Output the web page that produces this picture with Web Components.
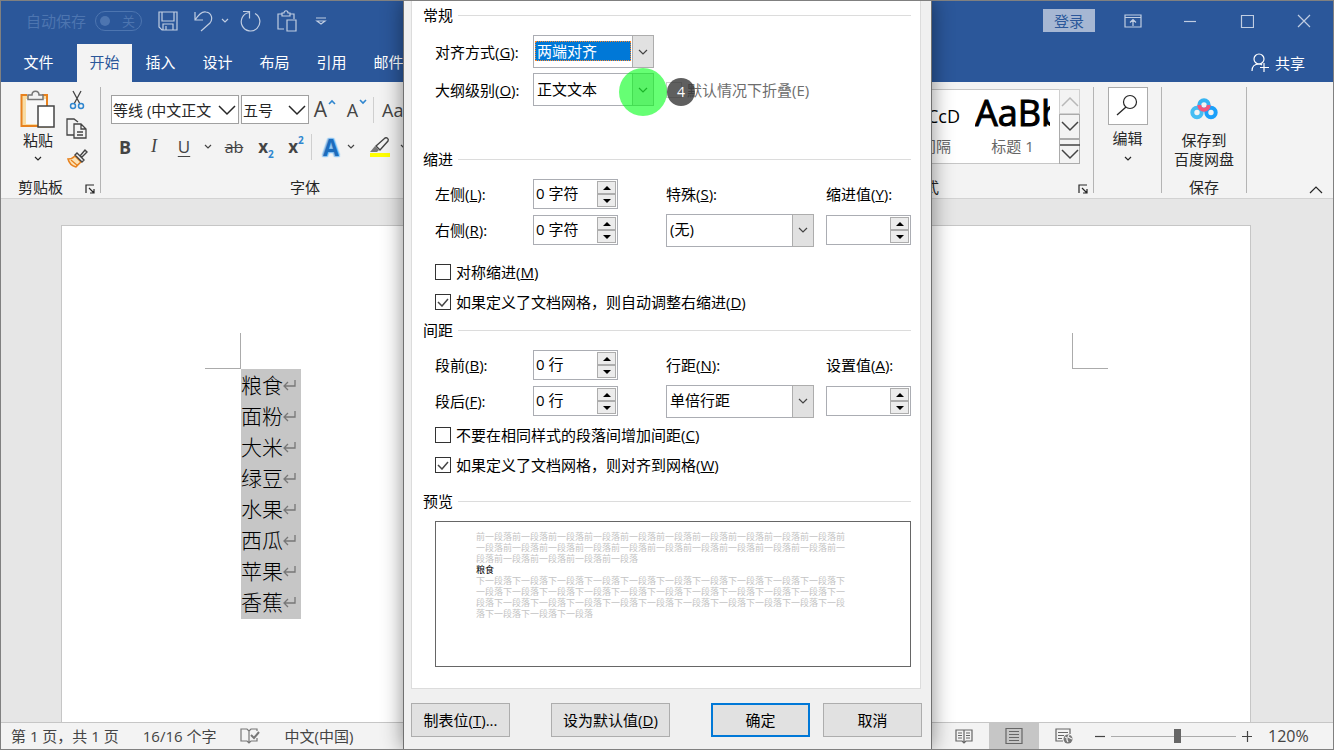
<!DOCTYPE html>
<html lang="zh-CN">
<head>
<meta charset="utf-8">
<title>Word</title>
<style>
  body { margin: 0; font: 15px/20px "Open Sans", "Noto Sans CJK SC", sans-serif; color: #262626; }
</style>
</head>
<body>
<word-window></word-window>
<script>
const define = (name, render) => customElements.define(name, class extends HTMLElement {
  connectedCallback() {
    if (this.shadowRoot) return;
    this.attachShadow({ mode: 'open' }).innerHTML = typeof render === 'function' ? render(this) : render;
  }
});

const reset = `
  :host, *, *::before, *::after { box-sizing: border-box; }
  button { font: inherit; color: inherit; background: none; border: 0; padding: 0; margin: 0;
           display: flex; align-items: center; justify-content: center; white-space: nowrap; }
  select, input { font: inherit; color: inherit; margin: 0; border-radius: 0; outline: 0; }
`;

/* ---------- icons ---------- */
const icons = {
  save: [20, 20, '<path d="M1 1h18v18H4l-3-3zM4 1v9h12V1M5 19v-6h10v6M8 19v-4"/>'],
  undo: [20, 22, '<path d="M2 2v8h8M2 10C6 4 10 1 13 2c6 1 7 7 4 11l-9 8"/>'],
  redo: [22, 22, '<path d="M9 2.500A9.300 9.300 0 1 0 15 3.500M3 1.500h6.500v7"/>'],
  clip: [20, 22, '<path d="M7 19H1V4h4M13 4h4v5M5 6V3h2c0-3 4-3 4 0h2v3zM10 10h9v11h-9z"/>'],
  qat: [12, 8, '<path d="M1 1h10M2 4h8L6 7z"/>'],
  chev: [8, 5, '<path d="M1 1l3 3 3-3"/>'],
  caret: [10, 6, '<path d="M1 1l4 4 4-4"/>'],
  inc: [8, 6, '<path d="M1 5l3-3 3 3" stroke-width="1.600"/>'],
  dec: [8, 6, '<path d="M1 1l3 3 3-3" stroke-width="1.600"/>'],
  wide: [18, 11, '<path d="M1 1l8 8 8-8" stroke-width="1.5"/>'],
  wideup: [18, 11, '<path d="M1 10l8-8 8 8" stroke-width="1.5"/>'],
  more: [20, 18, '<path d="M0 2h20M2 7l8 8 8-8" stroke-width="1.5"/>'],
  collapse: [14, 8, '<path d="M1 7l6-6 6 6"/>'],
  display: [18, 14, '<path d="M1 1h16v12H1zM1 3.500h16M9 12V6M6 8.500l3-3 3 3"/>'],
  min: [14, 14, '<path d="M1 7.500h12"/>'],
  max: [14, 14, '<path d="M1.500 1.500h12v12h-12z"/>'],
  close: [14, 14, '<path d="M1 1l12 12M13 1L1 13"/>'],
  share: [18, 20, '<circle cx="8" cy="6" r="5"/><path d="M1 18c0-4 2-7 7-7 1 0 2 0 3 1M13 10v9M9 14.500h9"/>'],
  paste: [36, 40, '<path d="M5 6h26v32H2V6z" fill="#f8dca4" stroke="none"/><rect x="6" y="9" width="20" height="25" fill="#f8f8f8" stroke="none"/><path d="M7 5H1.500v31H18M22 5h5v11" stroke="#e8821e" stroke-width="2"/><path d="M28 4h8v12h-8zM1 37h17v3H1z" fill="#f3f3f3" stroke="none"/><path d="M8 9.500V5h4c0-5 7-5 7 0h4v4.500z" fill="#f3f3f3" stroke="#777" stroke-width="1.500"/><path d="M18 16h16v21H18z" fill="#fff" stroke="#444" stroke-width="1.500"/>'],
  cut: [16, 20, '<path d="M4 1l7 13M12 1L5 14" stroke="#444" stroke-width="1.300"/><circle cx="4" cy="16" r="2.500" stroke="#2f86cf" stroke-width="1.500"/><circle cx="12" cy="16" r="2.500" stroke="#2f86cf" stroke-width="1.500"/>'],
  copy: [22, 22, '<path d="M8 17H1V1h7l4 3M8 6h7l5 5v9H8zM15 6v5h5M11 14h6M11 17h6" stroke="#444" stroke-width="1.300"/>'],
  brush: [22, 20, '<path d="M2 11c3 0 5-1 7-3l6 6c-2 2-4 3-5 5C6 18 3 15 2 11z" fill="#fbe3b8" stroke="#e8821e" stroke-width="1.500"/><path d="M5 12l7 6" stroke="#e8821e"/><path d="M9 7l2-2 7 7-2 2zM14 8l5-6 2 2-6 6" fill="#f3f3f3" stroke="#444" stroke-width="1.400"/>'],
  launch: [10, 10, '<path d="M1 9V1h8M4 4l5 5M9 5v4H5"/>'],
  find: [28, 24, '<circle cx="16" cy="8" r="6.500"/><path d="M12 13l-9 8" stroke-width="1.400"/>'],
  baidu: [28, 22, '<g stroke-width="4"><circle cx="14" cy="7" r="4.700" stroke="#36b4f2"/><circle cx="7" cy="14.500" r="4.700" stroke="#45bdf3"/><circle cx="21" cy="14.500" r="4.700" stroke="#1ba0fa"/><path d="M9.300 7a4.700 4.700 0 0 0 9.400 0" stroke="#f4567c"/></g>'],
  pen: [26, 22, '<path d="M9 10l9-8c2-1 4 1 3 3l-8 9z" stroke="#444" stroke-width="1.400" fill="#f3f3f3"/><path d="M8 10l4 4-2 2H3z" fill="#777" stroke="none"/><path d="M3 17h20v4H3z" fill="#ff0" stroke="none"/>'],
  proof: [20, 16, '<path d="M9 14V3L7 1H1v12h6l2 2 2-2h6v-3M9 3l2-2h6v2"/><path d="M11 7l3 3 5-6" stroke-width="2"/>'],
  read: [18, 16, '<path d="M9 2v12M9 2H1v11h6l2 2 2-2h6V2zM3 5h4M3 7.500h4M3 10h4M11 5h4M11 7.500h4M11 10h4"/>'],
  print: [18, 16, '<path d="M1 .5h16v15H1zM4 3.500h10M4 6.500h10M4 9.500h10M4 12.500h10"/>'],
  web: [18, 16, '<path d="M8 13H1V1h14v5M3 4.500h10M3 7.500h6M3 10.500h4"/><circle cx="13" cy="11" r="4.500" fill="#777" stroke="none"/><path d="M10 9l2 1v2l1 2M14 7l-1 2 2 1 2 1" stroke="#f3f3f3"/>'],
  minus: [12, 12, '<path d="M1 6.500h10"/>'],
  plus: [12, 12, '<path d="M1 6.500h10M6.500 1v11"/>'],
  up: [8, 4, '<path d="M0 4l4-4 4 4z" fill="#000" stroke="none"/>'],
  down: [8, 4, '<path d="M0 0h8L4 4z" fill="#000" stroke="none"/>'],
  ret: [14, 14, '<path d="M12 2v6H1M5 4L1 8l4 4" stroke-width="1.300"/>'],
  tick: [12, 9, '<path d="M1 4l4 4 6-7" stroke-width="1.500"/>']
};
define('ui-icon', el => {
  const [w, h, body] = icons[el.getAttribute('name')];
  return `<style>:host { display: inline-flex; flex: none; } svg { display: block; fill: none; stroke: currentColor; stroke-width: 1.2; }</style>
  <svg width="${w}" height="${h}" viewBox="0 0 ${w} ${h}" aria-hidden="true">${body}</svg>`;
});

/* ---------- title bar ---------- */
define('title-bar', `<style>${reset}
  :host { display: flex; height: 40px; align-items: center; padding: 0 1px 1px 0; background: #2b579a; color: #c0cde2; }
  .auto { display: flex; align-items: center; gap: 9px; padding-left: 25px; color: #4d75b0; }
  .switch { width: 47px; height: 20px; border: 1px solid #4d75b0; border-radius: 10px; justify-content: space-between; padding: 0 6px 0 4px; font-size: 13px; }
  .switch::before { content: ""; width: 10px; height: 10px; border-radius: 5px; background: #4d75b0; }
  .quick { display: flex; align-items: center; padding-left: 8px; flex: 1; }
  .quick button { height: 30px; }
  .save { width: 36px; } .undo { width: 34px; } .drop { width: 10px; } .redo { width: 42px; } .clip { width: 30px; } .qat { width: 38px; }
  .login { width: 52px; height: 23px; background: #a6b7d3; color: #2b579a; margin-right: 9px; }
  .win { width: 57px; height: 38px; }
</style>
<div class="auto"><span id="auto">自动保存</span><button class="switch" role="switch" aria-checked="false" aria-labelledby="auto">关</button></div>
<div class="quick">
  <button class="save" aria-label="保存"><ui-icon name="save"></ui-icon></button>
  <button class="undo" aria-label="撤消"><ui-icon name="undo"></ui-icon></button>
  <button class="drop" aria-label="撤消列表"><ui-icon name="chev"></ui-icon></button>
  <button class="redo" aria-label="重复"><ui-icon name="redo"></ui-icon></button>
  <button class="clip" aria-label="粘贴"><ui-icon name="clip"></ui-icon></button>
  <button class="qat" aria-label="自定义"><ui-icon name="qat"></ui-icon></button>
</div>
<button class="login">登录</button>
<button class="win" aria-label="功能区显示选项"><ui-icon name="display"></ui-icon></button>
<button class="win" aria-label="最小化"><ui-icon name="min"></ui-icon></button>
<button class="win" aria-label="最大化"><ui-icon name="max"></ui-icon></button>
<button class="win" aria-label="关闭"><ui-icon name="close"></ui-icon></button>`);

define('ribbon-tabs', `<style>${reset}
  :host { display: flex; height: 41px; padding-top: 3px; background: #2b579a; color: #fff; }
  nav { display: flex; flex: 1; }
  a { width: 57px; padding-bottom: 2px; color: inherit; text-decoration: none; display: flex; align-items: center; justify-content: center; }
  .file { width: 75px; }
  .on { width: 55px; background: #f3f3f3; color: #2b579a; margin-left: 1px; }
  .share { gap: 6px; padding-right: 28px; }
</style>
<nav><a class="file" href="#file">文件</a><a class="on" href="#home">开始</a><a href="#insert">插入</a><a href="#design">设计</a><a href="#layout">布局</a><a href="#refs">引用</a><a href="#mail">邮件</a></nav>
<button class="share"><ui-icon name="share"></ui-icon>共享</button>`);

/* ---------- ribbon ---------- */
define('ribbon-group', el => `<style>${reset}
  :host { display: flex; flex: none; }
  .main { flex: 1; min-width: 0; display: flex; flex-direction: column; }
  .body { flex: 1; }
  .foot { display: flex; height: 21px; padding-bottom: 1px; align-items: center; }
  .name { flex: 1; text-align: center; }
  .launch { width: 20px; height: 20px; padding-top: 4px; }
  .rule { width: 1px; margin: 5px 0; background: #b4b4b4; }
</style>
<div class="main"><div class="body"><slot></slot></div>
  <div class="foot"><span class="name">${el.getAttribute('label') || ''}</span>${el.hasAttribute('launcher') ? '<button class="launch" aria-label="更多选项"><ui-icon name="launch"></ui-icon></button>' : ''}</div>
</div><div class="rule"></div>`);

define('clipboard-tools', `<style>${reset}
  :host { display: flex; padding: 3px 0 0 21px; gap: 8px; }
  .paste { width: 32px; flex-direction: column; margin-top: 5px; height: 76px; justify-content: flex-start; }
  .paste ui-icon:last-child { margin-top: 6px; }
  .small { padding-left: 4px; }
  .small button { width: 22px; height: 29px; }
</style>
<button class="paste"><ui-icon name="paste"></ui-icon>粘贴<ui-icon name="chev"></ui-icon></button>
<div class="small">
  <button aria-label="剪切"><ui-icon name="cut"></ui-icon></button>
  <button aria-label="复制"><ui-icon name="copy"></ui-icon></button>
  <button aria-label="格式刷"><ui-icon name="brush"></ui-icon></button>
</div>`);

define('font-tools', `<style>${reset}
  :host { display: block; padding: 13px 0 0 10px; color: #444; }
  .row { display: flex; height: 29px; align-items: center; }
  .row + .row { margin-top: 8px; }
  .combo { position: relative; width: 128px; height: 29px; margin-right: 2px; color: #262626; }
  .size { width: 68px; margin: 0; }
  .combo ui-icon { position: absolute; right: 3px; top: 10px; pointer-events: none; }
  select { appearance: none; width: 100%; height: 29px; border: 1px solid #a0a0a0; background: #fff; padding: 0 24px 0 1px; }
  button { height: 28px; }
  .grow, .shrink { width: 32px; align-items: flex-start; gap: 1px; }
  .grow { font-size: 21px; line-height: 26px; } .shrink { font-size: 18px; line-height: 28px; }
  .grow ui-icon, .shrink ui-icon { color: #2f86cf; margin-top: 3px; }
  .case { font-size: 18px; line-height: 28px; padding-left: 8px; }
  .bar { width: 1px; height: 26px; background: #cfcfcf; }
  .w28 { width: 28px; } .w30 { width: 30px; } .w18 { width: 18px; } .w34 { width: 34px; } .w22 { width: 22px; } .w40 { width: 40px; }
  .b { font-weight: 700; font-size: 18px; } .i { font: italic 18px "Liberation Serif", serif; } .u { font-size: 17px; text-decoration: underline; text-underline-offset: 3px; }
  .ab { text-decoration: line-through; font-size: 16px; }
  .x { font-weight: 700; font-size: 17px; } .x span { color: #2f86cf; font-size: 10px; }
  .x .lo { padding-top: 14px; } .x .hi { padding-bottom: 14px; }
  .gap { width: 8px; }
  .fx { font-weight: 700; font-size: 23px; color: #1c6cbc; text-shadow: 0 0 2px #6db3ee, 1px 1px 1px #8cc4f2, -1px -1px 1px #8cc4f2, 1px -1px 1px #8cc4f2, -1px 1px 1px #8cc4f2; }
</style>
<div class="row">
  <div class="combo"><select aria-label="字体"><option>等线 (中文正文</option></select><ui-icon name="wide"></ui-icon></div>
  <div class="combo size"><select aria-label="字号"><option>五号</option></select><ui-icon name="wide"></ui-icon></div>
  <button class="grow" aria-label="增大字号">A<ui-icon name="inc"></ui-icon></button>
  <button class="shrink" aria-label="减小字号">A<ui-icon name="dec"></ui-icon></button>
  <span class="bar"></span>
  <button class="case">Aa</button>
</div>
<div class="row">
  <button class="b w28">B</button><button class="i w30">I</button><button class="u w30">U</button><button class="w18" aria-label="下划线"><ui-icon name="chev"></ui-icon></button>
  <button class="ab w34">ab</button><button class="x w30">x<span class="lo">2</span></button><button class="x w30">x<span class="hi">2</span></button>
  <span class="bar"></span><span class="gap"></span>
  <button class="fx w22">A</button><button class="w18" aria-label="文本效果"><ui-icon name="chev"></ui-icon></button>
  <button class="w40" aria-label="突出显示"><ui-icon name="pen"></ui-icon></button><button aria-label="颜色"><ui-icon name="chev"></ui-icon></button>
</div>`);

define('style-gallery', `<style>${reset}
  :host { display: flex; justify-content: flex-end; padding: 7px 13px 0 0; }
  .tiles { display: flex; height: 75px; background: #fff; border: 1px solid #c6c6c6; border-right: 0; color: #666; }
  .tile { width: 90px; height: 73px; flex-direction: column; justify-content: flex-start; align-items: stretch; padding: 0 9px 0 6px; }
  .demo { height: 46px; overflow: hidden; text-align: left; color: #000; }
  .plain { font: 18px/52px "Open Sans", sans-serif; }
  .head { font-size: 36px; line-height: 46px; -webkit-text-stroke: 1px #000; }
  .first { width: 92px; }
  .first .label { text-align: right; padding-right: 9px; }
  .scroll { display: flex; flex-direction: column; width: 21px; }
  .scroll button { height: 25px; border: 1px solid #ababab; background: #f3f3f3; color: #444; }
  .scroll .off { color: #b8b8b8; border-color: #d0d0d0; }
</style>
<div class="tiles">
  <button class="tile first"><span class="demo plain">AaBbCcDc</span><span class="label">无间隔</span></button>
  <button class="tile"><span class="demo head">AaBb</span><span>标题 1</span></button>
</div>
<div class="scroll">
  <button class="off" aria-label="上一行"><ui-icon name="wideup"></ui-icon></button>
  <button aria-label="下一行"><ui-icon name="wide"></ui-icon></button>
  <button aria-label="其他"><ui-icon name="more"></ui-icon></button>
</div>`);

define('tall-button', el => `<style>${reset}
  :host { display: block; }
  button { flex-direction: column; width: 100%; justify-content: flex-start; line-height: 19px; }
  .pic { display: flex; align-items: center; justify-content: center; }
  :host([boxed]) .pic { width: 40px; height: 38px; border: 1px solid #ababab; background: #fff; margin: 5px 0 4px; }
  :host(:not([boxed])) .pic { height: 22px; margin: 16px 0 11px; }
  .more { margin-top: 8px; }
</style>
<button><span class="pic"><ui-icon name="${el.getAttribute('icon')}"></ui-icon></span><slot></slot>${el.hasAttribute('boxed') ? '<ui-icon class="more" name="chev"></ui-icon>' : ''}</button>`);

define('word-ribbon', `<style>${reset}
  :host { display: flex; height: 117px; background: #f3f3f3; border-bottom: 1px solid #d2d2d2; }
  .clipboard { width: 100px; } .font { width: 429px; } .styles { width: 319px; } .edit { width: 68px; } .cloud { width: 85px; }
  .fill { flex: 1; }
  .tail { width: 86px; display: flex; justify-content: flex-end; align-items: flex-end; padding: 0 10px 4px 0; }
</style>
<ribbon-group class="clipboard" label="剪贴板" launcher><clipboard-tools></clipboard-tools></ribbon-group>
<ribbon-group class="font" label="字体" launcher><font-tools></font-tools></ribbon-group>
<div class="fill"></div>
<ribbon-group class="styles" label="样式" launcher><style-gallery></style-gallery></ribbon-group>
<ribbon-group class="edit"><tall-button icon="find" boxed>编辑</tall-button></ribbon-group>
<ribbon-group class="cloud" label="保存"><tall-button icon="baidu"><span>保存到<br>百度网盘</span></tall-button></ribbon-group>
<div class="tail"><button aria-label="折叠功能区"><ui-icon name="collapse"></ui-icon></button></div>`);

/* ---------- document ---------- */
define('document-page', `<style>${reset}
  :host { display: block; flex: 1; min-height: 0; overflow: hidden; background: #e6e6e6; padding: 26px 82px 0 60px; }
  .page { height: 100%; background: #fff; border: 1px solid #c6c6c6; border-bottom: 0; padding: 107px 142px 0 143px; }
  .marks { display: flex; justify-content: space-between; }
  .mark { width: 36px; height: 36px; border: solid #ababab; border-width: 0 1px 1px 0; }
  .mark + .mark { border-width: 0 0 1px 1px; }
  .text { margin-left: 36px; width: 60px; background: #c6c6c6; color: #000; font: 300 21px/31px "Noto Sans CJK SC", sans-serif; padding-bottom: 2px; }
  p { margin: 0; display: flex; align-items: center; }
  ui-icon { color: #777; }
</style>
<div class="page"><div class="marks"><div class="mark"></div><div class="mark"></div></div>
<div class="text">${['粮食', '面粉', '大米', '绿豆', '水果', '西瓜', '苹果', '香蕉'].map(t => `<p>${t}<ui-icon name="ret"></ui-icon></p>`).join('')}</div></div>`);

/* ---------- status bar ---------- */
define('status-bar', `<style>${reset}
  :host { display: flex; height: 27px; align-items: center; background: #f3f3f3; border-top: 1px solid #c6c6c6; color: #444; }
  .info { display: flex; align-items: center; gap: 24px; padding-left: 10px; flex: 1; white-space: nowrap; }
  .info ui-icon { color: #777; }
  .view { width: 50px; height: 26px; color: #666; }
  .on { background: #c6c6c6; }
  .step { width: 22px; height: 26px; }
  input { appearance: none; width: 125px; height: 14px; background: linear-gradient(#ababab, #ababab) 0 7px / 100% 1px no-repeat; }
  input::-webkit-slider-thumb { appearance: none; width: 7px; height: 14px; background: #666; }
  .zoom { width: 75px; padding-left: 10px; font-size: 16px; }
</style>
<div class="info"><span>第 1 页，共 1 页</span><span>16/16 个字</span><ui-icon name="proof"></ui-icon><span>中文(中国)</span></div>
<button class="view" aria-label="阅读视图"><ui-icon name="read"></ui-icon></button>
<button class="view on" aria-label="页面视图"><ui-icon name="print"></ui-icon></button>
<button class="view" aria-label="Web 版式"><ui-icon name="web"></ui-icon></button>
<button class="step" aria-label="缩小"><ui-icon name="minus"></ui-icon></button>
<input type="range" min="0" max="100" value="53" aria-label="显示比例">
<button class="step" aria-label="放大"><ui-icon name="plus"></ui-icon></button>
<span class="zoom">120%</span>`);

/* ---------- dialog fields ---------- */
const fieldLayout = `
  :host { display: contents; color: #000; }
  label { align-self: center; white-space: nowrap; color: #000; }
  :host([stacked]) { display: grid; grid-template-rows: 30px 30px; row-gap: 6px; grid-row: span 2; align-content: start; }
`;
const caption = el => `<label for="f">${el.getAttribute('label')}(<u>${el.getAttribute('key')}</u>):</label>`;

define('combo-field', el => `<style>${reset}${fieldLayout}
  .box { position: relative; width: 121px; height: 33px; align-self: center; color: #000; }
  :host([stacked]) .box { width: 148px; }
  select { appearance: none; width: 100%; height: 33px; border: 1px solid #abadb3; background: #fff; padding: 0 22px 2px 3px; }
  .arrow { position: absolute; right: 0; top: 0; width: 22px; height: 33px; border: 1px solid #adadad; background: #e1e1e1; display: grid; place-items: center; pointer-events: none; color: #444; }
  :host([active]) select { color: #fff; background: linear-gradient(#0078d7, #0078d7) 1px 5px / 96px 20px no-repeat #fff; }
  :host([active]) .box::before { content: ""; position: absolute; left: 2px; top: 6px; width: 96px; height: 20px; border: 1px dotted #ff8728; pointer-events: none; }
</style>
${caption(el)}<div class="box"><select id="f"><option>${el.getAttribute('value')}</option></select><span class="arrow"><ui-icon name="caret"></ui-icon></span></div>`);

define('spin-field', el => `<style>${reset}${fieldLayout}
  .box { display: flex; width: 85px; height: 30px; border: 1px solid #abadb3; background: #fff; padding: 1px; align-self: center; color: #000; }
  input { flex: 1; min-width: 0; border: 0; padding: 0 0 4px 1px; height: 26px; background: none; }
  .steps { width: 19px; }
  .steps button { width: 19px; height: 13px; border: 1px solid #adadad; background: #ececec; }
</style>
${caption(el)}<div class="box"><input id="f" type="text" value="${el.getAttribute('value') || ''}"><div class="steps"><button aria-label="增加"><ui-icon name="up"></ui-icon></button><button aria-label="减少"><ui-icon name="down"></ui-icon></button></div></div>`);

define('check-field', el => `<style>${reset}
  :host { display: flex; align-items: center; height: 20px; color: #000; }
  :host([disabled]) { color: #6d6d6d; }
  label { display: flex; align-items: center; gap: 5px; white-space: nowrap; }
  .box { position: relative; display: flex; }
  input { appearance: none; width: 16px; height: 16px; border: 1px solid #333; background: #fff; }
  input:disabled { border-color: #ccc; }
  .box ui-icon { position: absolute; left: 2px; top: 4px; color: #444; pointer-events: none; }
</style>
<label><span class="box"><input type="checkbox"${el.hasAttribute('checked') ? ' checked' : ''}${el.hasAttribute('disabled') ? ' disabled' : ''}>${el.hasAttribute('checked') ? '<ui-icon name="tick"></ui-icon>' : ''}</span><span><slot></slot></span></label>`);

define('field-section', el => `<style>
  :host { display: block; color: #000; }
  h2 { display: flex; align-items: center; gap: 5px; margin: 0 0 10px; font: inherit; }
  h2::after { content: ""; flex: 1; height: 1px; background: #dcdcdc; }
  .body { padding-left: 12px; }
</style>
<h2>${el.getAttribute('heading')}</h2><div class="body"><slot></slot></div>`);

define('paragraph-preview', `<style>
  :host { display: block; box-sizing: border-box; height: 146px; border: 1px solid #666; background: #fff; padding: 9px 62px 0 40px; font: 9px/11px "Noto Sans CJK SC", sans-serif; color: #c4c4c4; }
  p { margin: 0; width: 370px; line-break: anywhere; }
  .now { color: #000; }
</style>
<p>${'前一段落'.repeat(25)}</p><p class="now">粮食</p><p>${'下一段落'.repeat(34)}</p>`);

define('click-marker', `<style>
  :host { position: absolute; left: 184px; top: 33px; display: flex; align-items: center; pointer-events: none; }
  .spot { width: 48px; height: 48px; border-radius: 50%; background: rgba(0, 255, 24, .6); }
  .step { width: 28px; height: 28px; border-radius: 50%; background: rgba(50, 50, 50, .78); color: #fff; text-align: center; font-size: 14px; line-height: 28px; }
</style>
<span class="spot"></span><span class="step">4</span>`);

define('paragraph-dialog', `<style>${reset}
  :host { position: absolute; top: 0; left: calc(50% - 264px); width: 529px; min-height: 100%; background: #f0f0f0; border: solid #707070; border-width: 0 1px; padding: 0 9px 12px 7px; box-shadow: 0 0 20px rgba(0, 0, 0, .45); color: #000; }
  .panel { margin-right: 1px; background: #fff; border: 1px solid #dcdcdc; border-top: 0; padding: 5px 9px 21px 11px; }
  .grid { display: grid; grid-template-columns: 98px 133px 160px 85px; grid-auto-rows: 30px; row-gap: 6px; }
  .top { position: relative; grid-auto-rows: 33px; row-gap: 5px; margin-bottom: 43px; }
  .top .fold { grid-column: 3 / 5; align-self: center; }
  .checks { display: grid; gap: 10px; }
  .indent .checks { margin: 17px 0 8px; }
  .spacing .checks { margin: 9px 0 16px; }
  .actions { display: flex; margin-top: 14px; }
  .actions button { height: 34px; width: 99px; border: 1px solid #adadad; background: #e1e1e1; }
  .actions .default { width: 119px; margin-left: 41px; }
  .actions .ok { margin: 0 13px 0 auto; border: 2px solid #0078d7; }
</style>
<div class="panel">
  <field-section heading="常规">
    <div class="grid top">
      <combo-field label="对齐方式" key="G" value="两端对齐" active></combo-field><span></span><span></span>
      <combo-field label="大纲级别" key="O" value="正文文本"></combo-field>
      <check-field class="fold" disabled>默认情况下折叠(E)</check-field>
      <click-marker></click-marker>
    </div>
  </field-section>
  <field-section class="indent" heading="缩进">
    <div class="grid">
      <spin-field label="左侧" key="L" value="0 字符"></spin-field>
      <combo-field stacked label="特殊" key="S" value="(无)"></combo-field>
      <spin-field stacked label="缩进值" key="Y"></spin-field>
      <spin-field label="右侧" key="R" value="0 字符"></spin-field>
    </div>
    <div class="checks">
      <check-field>对称缩进(<u>M</u>)</check-field>
      <check-field checked>如果定义了文档网格，则自动调整右缩进(<u>D</u>)</check-field>
    </div>
  </field-section>
  <field-section class="spacing" heading="间距">
    <div class="grid">
      <spin-field label="段前" key="B" value="0 行"></spin-field>
      <combo-field stacked label="行距" key="N" value="单倍行距"></combo-field>
      <spin-field stacked label="设置值" key="A"></spin-field>
      <spin-field label="段后" key="F" value="0 行"></spin-field>
    </div>
    <div class="checks">
      <check-field>不要在相同样式的段落间增加间距(<u>C</u>)</check-field>
      <check-field checked>如果定义了文档网格，则对齐到网格(<u>W</u>)</check-field>
    </div>
  </field-section>
  <field-section heading="预览"><paragraph-preview></paragraph-preview></field-section>
</div>
<div class="actions">
  <button><span>制表位(<u>T</u>)...</span></button>
  <button class="default"><span>设为默认值(<u>D</u>)</span></button>
  <button class="ok">确定</button>
  <button>取消</button>
</div>`);

define('word-window', `<style>
  :host { display: flex; flex-direction: column; position: relative; box-sizing: border-box; height: 100vh; min-height: 700px; border: 1px solid #808080; overflow: hidden; }
  paragraph-dialog { margin-top: -1px; }
</style>
<title-bar></title-bar><ribbon-tabs></ribbon-tabs><word-ribbon></word-ribbon><document-page></document-page><status-bar></status-bar>
<paragraph-dialog></paragraph-dialog>`);
</script>
</body>
</html>
